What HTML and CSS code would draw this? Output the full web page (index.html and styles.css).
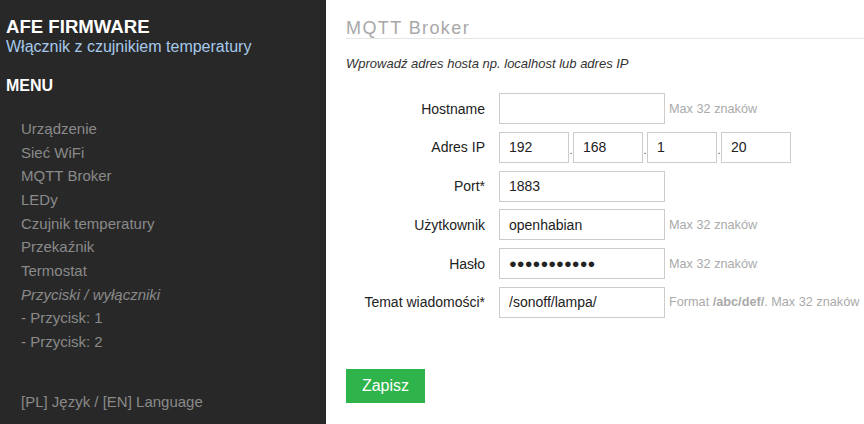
FILE: index.html
```html
<!DOCTYPE html>
<html lang="pl">
<head>
<meta charset="utf-8">
<title>AFE Firmware</title>
<link rel="stylesheet" href="styles.css">
</head>
<body>
<div class="page">
  <aside class="sidebar">
    <div class="brand">AFE FIRMWARE</div>
    <div class="subtitle">Włącznik z czujnikiem temperatury</div>
    <div class="menu-title">MENU</div>
    <ul class="menu">
      <li>Urządzenie</li>
      <li>Sieć WiFi</li>
      <li>MQTT Broker</li>
      <li>LEDy</li>
      <li>Czujnik temperatury</li>
      <li>Przekaźnik</li>
      <li>Termostat</li>
      <li class="italic">Przyciski / wyłączniki</li>
      <li>- Przycisk: 1</li>
      <li>- Przycisk: 2</li>
    </ul>
    <div class="lang">[PL] Język / [EN] Language</div>
  </aside>
  <main class="content">
    <h2 class="section-title">MQTT Broker</h2>
    <p class="desc">Wprowadź adres hosta np. localhost lub adres IP</p>
    <form class="form">
      <div class="row">
        <label class="label">Hostname</label>
        <input class="input" type="text" value="">
        <span class="hint">Max 32 znaków</span>
      </div>
      <div class="row">
        <label class="label">Adres IP</label>
        <div class="ip">
          <input class="input ip-part" type="text" value="192">
          <span class="dot">.</span>
          <input class="input ip-part" type="text" value="168">
          <span class="dot">.</span>
          <input class="input ip-part" type="text" value="1">
          <span class="dot">.</span>
          <input class="input ip-part" type="text" value="20">
        </div>
      </div>
      <div class="row">
        <label class="label">Port*</label>
        <input class="input" type="text" value="1883">
      </div>
      <div class="row">
        <label class="label">Użytkownik</label>
        <input class="input" type="text" value="openhabian">
        <span class="hint">Max 32 znaków</span>
      </div>
      <div class="row">
        <label class="label">Hasło</label>
        <input class="input pass" type="text" value="●●●●●●●●●●●">
        <span class="hint">Max 32 znaków</span>
      </div>
      <div class="row">
        <label class="label">Temat wiadomości*</label>
        <input class="input" type="text" value="/sonoff/lampa/">
        <span class="hint">Format <b>/abc/def/</b>. Max 32 znaków</span>
      </div>
      <button class="btn" type="button">Zapisz</button>
    </form>
  </main>
</div>
</body>
</html>
```

FILE: styles.css
```css
html, body {
  margin: 0;
  padding: 0;
  background: #fff;
}
body {
  font-family: "Liberation Sans", Arial, sans-serif;
  color: #333;
}
.page {
  display: flex;
  height: 424px;
  overflow: hidden;
}
.sidebar {
  width: 326px;
  flex: none;
  background: #282828;
  padding: 17px 0 0 6px;
  box-sizing: border-box;
}
.brand {
  font-size: 18.6px;
  font-weight: bold;
  line-height: 20px;
  color: #fff;
}
.subtitle {
  font-size: 16px;
  line-height: 20px;
  color: #a6c8ea;
}
.menu-title {
  margin-top: 19px;
  font-size: 16px;
  font-weight: bold;
  line-height: 20px;
  color: #fff;
}
.menu {
  list-style: none;
  margin: 21px 0 0 0;
  padding: 0 0 0 15px;
}
.menu li {
  font-size: 15px;
  line-height: 23.67px;
  color: #8a8a8a;
}
.menu .italic {
  font-style: italic;
}
.lang {
  margin-top: 36px;
  padding-left: 15px;
  font-size: 15px;
  line-height: 23.67px;
  color: #8a8a8a;
}
.content {
  flex: 1;
  padding-left: 20px;
  min-width: 0;
}
.section-title {
  margin: 18px 0 0 0;
  font-size: 18px;
  font-weight: normal;
  line-height: 20px;
  letter-spacing: 1.4px;
  color: #a8a8a8;
  border-bottom: 1px solid #e6e6e6;
}
.desc {
  margin: 17px 0 0 0;
  font-size: 13px;
  line-height: 16px;
  font-style: italic;
  color: #333;
}
.form {
  margin-top: 21px;
  display: flex;
  flex-direction: column;
  gap: 7.8px;
}
.row {
  display: flex;
  align-items: center;
  white-space: nowrap;
}
.label {
  width: 139px;
  margin-right: 14px;
  text-align: right;
  font-size: 14px;
  color: #222;
  flex: none;
}
.input {
  width: 166px;
  height: 31px;
  box-sizing: border-box;
  border: 1px solid #ccc;
  border-radius: 0;
  padding: 0 9px;
  margin: 0;
  font-family: "Liberation Sans", Arial, sans-serif;
  font-size: 14px;
  color: #222;
  background: #fff;
  outline: none;
  flex: none;
}
.pass {
  font-size: 13px;
  letter-spacing: 0;
}
.ip {
  display: flex;
  align-items: stretch;
}
.ip-part {
  width: 70px;
}
.dot {
  width: 4px;
  display: flex;
  align-items: flex-end;
  justify-content: center;
  font-size: 11px;
  line-height: 1;
  padding-bottom: 7px;
  box-sizing: border-box;
  color: #444;
}
.hint {
  margin-left: 4px;
  font-size: 12.7px;
  color: #aaa;
}
.hint b {
  font-weight: bold;
}
.btn {
  align-self: flex-start;
  margin-top: 43px;
  width: 79px;
  height: 34px;
  border: none;
  border-radius: 0;
  background: #2fb34b;
  color: #fff;
  font-family: "Liberation Sans", Arial, sans-serif;
  font-size: 16px;
  padding: 0;
  cursor: pointer;
}
```
